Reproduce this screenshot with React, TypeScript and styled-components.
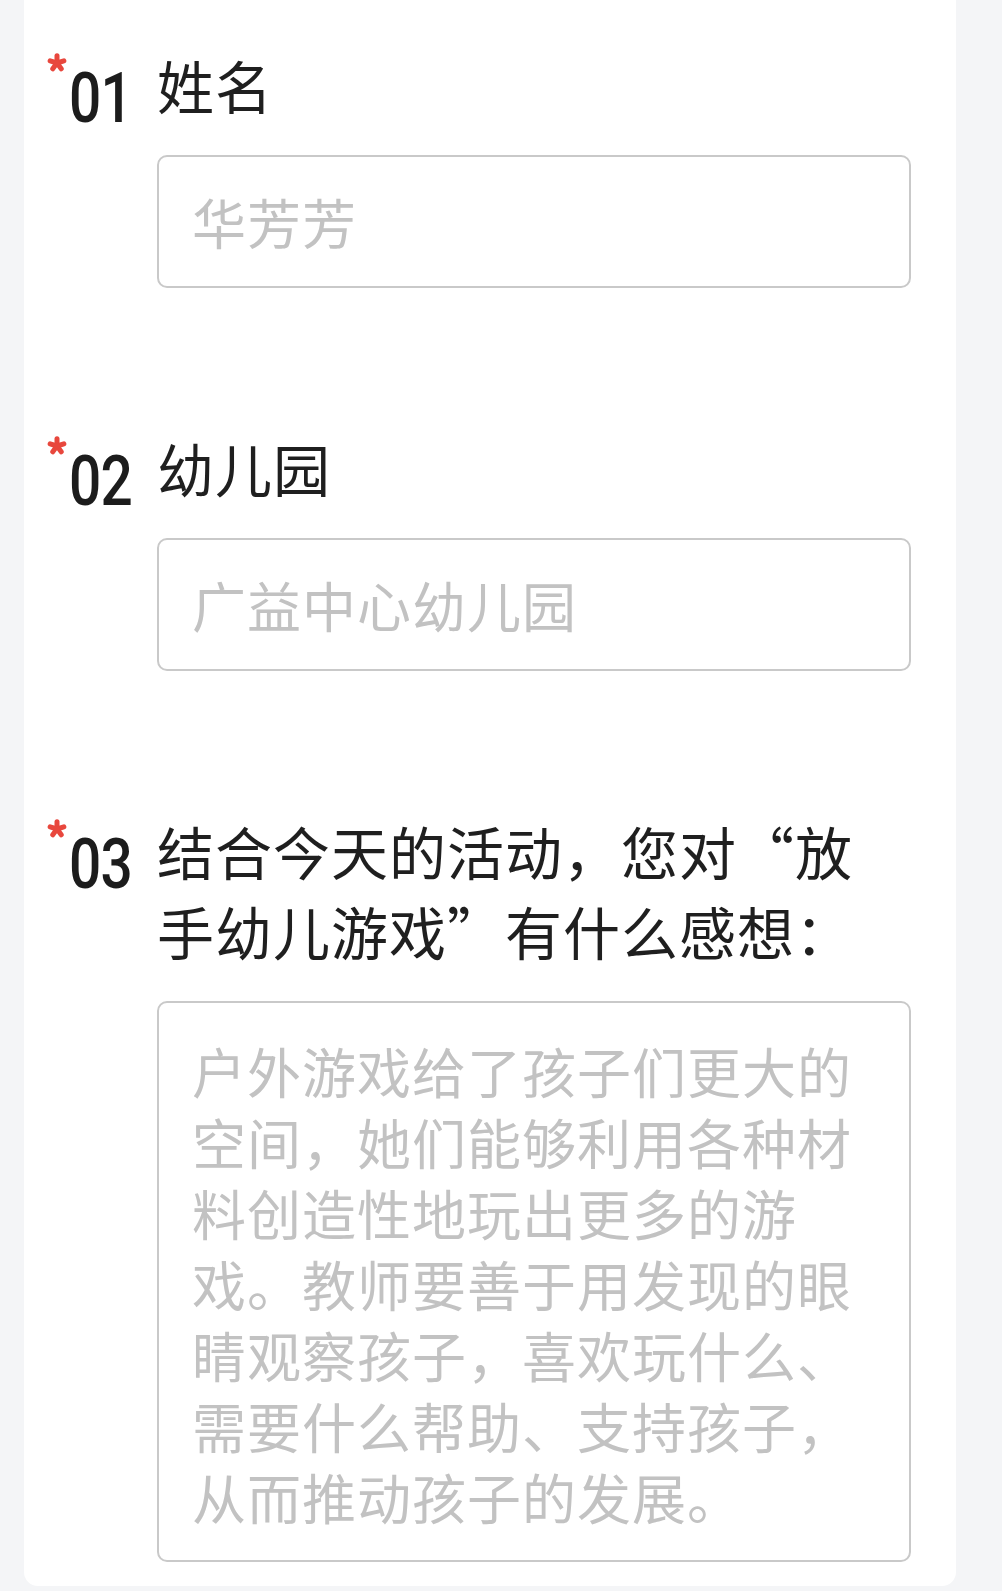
import styled, { createGlobalStyle } from "styled-components"

const GlobalStyle = createGlobalStyle`
  html, body {
    margin: 0;
    padding: 0;
    background: #f4f5f7;
  }

  body {
    font-family: "Noto Sans CJK SC", "Noto Sans", sans-serif;
    color: #1f1f1f;
  }
`

const Page = styled.main`
  width: 1002px;
  min-height: 1591px;
  padding: 0 46px 9px 24px;
  box-sizing: border-box;
`

const Card = styled.form`
  background: #fff;
  border-radius: 0 0 14px 14px;
  padding: 44px 45px 24px 23px;
  display: flex;
  flex-direction: column;
  gap: 139px;
`

const Question = styled.section`
  display: grid;
  grid-template-columns: 110px 1fr;
  align-items: start;
`

const Marker = styled.div`
  display: flex;
  align-items: flex-start;
  margin-top: 14px;
`

const Star = styled.svg`
  width: 20px;
  height: 20px;
  margin-top: -5px;
  flex: none;
`

/* DIN-like narrow digits: Roboto squeezed horizontally */
const Num = styled.span`
  display: inline-block;
  font-family: "Roboto", "Liberation Sans", sans-serif;
  font-size: 71px;
  line-height: 80px;
  font-weight: 500;
  color: #1c1c1c;
  letter-spacing: -1px;
  margin-left: 2px;
  transform: scaleX(0.8);
  transform-origin: left center;
`

const Body = styled.div`
  display: flex;
  flex-direction: column;
  gap: 31px;
`

const Title = styled.h2`
  margin: 0;
  padding-right: 40px;
  font-size: 57px;
  line-height: 80px;
  font-weight: 400;
  letter-spacing: 1px;
  color: #1f1f1f;
`

const fieldStyle = `
  width: 100%;
  box-sizing: border-box;
  border: 2px solid #c9c9c9;
  border-radius: 10px;
  background: #fff;
  font-family: "Noto Sans CJK SC", "Noto Sans", sans-serif;
  font-size: 54px;
  letter-spacing: 1px;
  color: #333;
  outline: none;

  &::placeholder {
    color: #c2c2c2;
    opacity: 1;
  }
`

const TextInput = styled.input`
  ${fieldStyle}
  height: 133px;
  padding: 0 40px 0 33px;
`

const TextArea = styled.textarea`
  ${fieldStyle}
  height: 561px;
  padding: 32px 40px 0 33px;
  line-height: 71px;
  resize: none;
  overflow: hidden;
`

function Asterisk() {
  const arms = [-90, -18, 54, 126, 198]
  return (
    <Star viewBox="0 0 20 20">
      {arms.map(a => {
        const r = (a * Math.PI) / 180
        return (
          <line
            key={a}
            x1="10"
            y1="10"
            x2={10 + 7.2 * Math.cos(r)}
            y2={10 + 7.2 * Math.sin(r)}
            stroke="#e8473d"
            strokeWidth="5"
            strokeLinecap="round"
          />
        )
      })}
    </Star>
  )
}

type FieldProps = {
  num: string
  title: string
  placeholder: string
  multiline?: boolean
}

function Field({ num, title, placeholder, multiline }: FieldProps) {
  return (
    <Question>
      <Marker>
        <Asterisk />
        <Num>{num}</Num>
      </Marker>
      <Body>
        <Title>{title}</Title>
        {multiline
          ? <TextArea placeholder={placeholder} />
          : <TextInput placeholder={placeholder} />}
      </Body>
    </Question>
  )
}

function App() {
  return (
    <>
      <GlobalStyle />
      <Page>
        <Card>
          <Field num="01" title="姓名" placeholder="华芳芳" />
          <Field num="02" title="幼儿园" placeholder="广益中心幼儿园" />
          <Field
            num="03"
            title="结合今天的活动，您对“放手幼儿游戏”有什么感想："
            placeholder="户外游戏给了孩子们更大的空间，她们能够利用各种材料创造性地玩出更多的游戏。教师要善于用发现的眼睛观察孩子，喜欢玩什么、需要什么帮助、支持孩子，从而推动孩子的发展。"
            multiline
          />
        </Card>
      </Page>
    </>
  )
}

export default App
